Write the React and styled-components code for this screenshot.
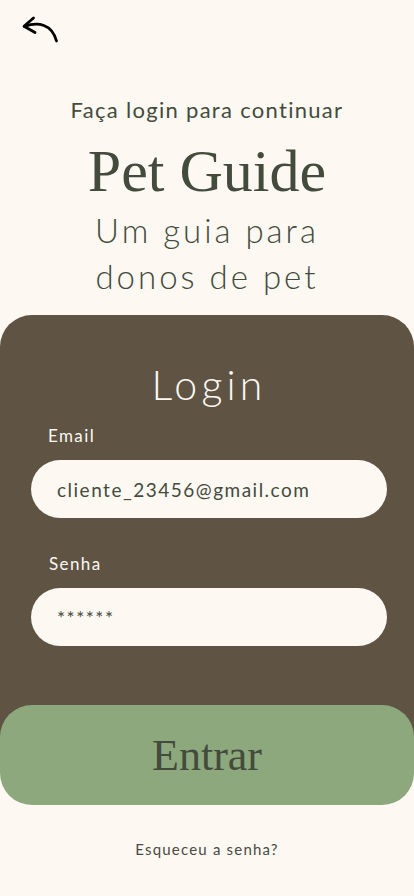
import styled, { createGlobalStyle } from "styled-components";

const GlobalStyle = createGlobalStyle`
  html, body {
    margin: 0;
    padding: 0;
    background: #fdf8f2;
  }
  body {
    font-family: Lato, "Noto Sans", sans-serif;
  }
`;

const colors = {
  cream: "#fdf8f2",
  panel: "#5f5443",
  green: "#8ca87c",
  ink: "#434b3d",
};

const Page = styled.div`
  width: 414px;
  min-height: 896px;
  background: ${colors.cream};
  display: flex;
  flex-direction: column;
  align-items: center;
`;

const TopBar = styled.div`
  width: 100%;
  height: 56px;
  display: flex;
  align-items: flex-start;
  padding: 12px 0 0 18px;
  box-sizing: border-box;
`;

const BackButton = styled.button`
  border: 0;
  background: none;
  padding: 0;
  width: 42px;
  height: 34px;
  cursor: pointer;
`;

const Intro = styled.p`
  margin: 40px 0 0;
  font-size: 22px;
  color: ${colors.ink};
  letter-spacing: 1.3px;
`;

const Title = styled.h1`
  margin: 12px 0 0;
  font-family: "Liberation Serif", serif;
  font-weight: 400;
  font-size: 60px;
  line-height: 72px;
  color: ${colors.ink};
`;

const Subtitle = styled.h2`
  margin: 0;
  font-weight: 300;
  font-size: 33px;
  line-height: 46px;
  letter-spacing: 3px;
  text-align: center;
  color: ${colors.ink};
`;

const Panel = styled.section`
  margin-top: 16px;
  width: 100%;
  background: ${colors.panel};
  border-radius: 32px 32px 0 0;
  padding: 44px 0 109px 4px;
  box-sizing: border-box;
  display: flex;
  flex-direction: column;
  align-items: center;
`;

const PanelTitle = styled.h3`
  margin: 0 0 14px;
  font-weight: 300;
  font-size: 41px;
  line-height: 52px;
  letter-spacing: 4.2px;
  color: ${colors.cream};
`;

const Field = styled.label`
  width: 356px;
  display: flex;
  flex-direction: column;
  margin-bottom: ${({ gap }) => gap || 0}px;
`;

const FieldLabel = styled.span`
  padding-left: ${({ indent }) => indent}px;
  font-size: 17px;
  line-height: 22px;
  letter-spacing: 1.4px;
  color: ${colors.cream};
  margin-bottom: 13px;
`;

const Input = styled.input`
  height: 58px;
  border: 0;
  border-radius: 29px;
  background: ${colors.cream};
  padding: 0 26px;
  font-family: Lato, "Noto Sans", sans-serif;
  font-size: 19px;
  letter-spacing: 1.5px;
  color: ${colors.ink};
  outline: none;
  box-sizing: border-box;
`;

const SubmitButton = styled.button`
  margin-top: -50px;
  width: 414px;
  height: 100px;
  border: 0;
  border-radius: 32px;
  background: ${colors.green};
  font-family: "Liberation Serif", serif;
  font-size: 44px;
  color: ${colors.ink};
  cursor: pointer;
`;

const Forgot = styled.a`
  margin-top: 35px;
  font-size: 15px;
  letter-spacing: 1.2px;
  color: #4a4a44;
  text-decoration: none;
`;

const BackArrow = () => (
  <svg width="42" height="34" viewBox="16 12 42 34" fill="none">
    <path
      d="M22.5 26.5 C 36 21.5, 50 24, 54.5 41"
      stroke="#000"
      strokeWidth="2.8"
      strokeLinecap="round"
    />
    <path
      d="M31.5 18 L22 26.2 L33 32.5"
      stroke="#000"
      strokeWidth="2.8"
      strokeLinecap="round"
      strokeLinejoin="round"
    />
  </svg>
);

export default function App() {
  return (
    <>
      <GlobalStyle />
      <Page>
        <TopBar>
          <BackButton aria-label="Voltar">
            <BackArrow />
          </BackButton>
        </TopBar>
        <Intro>Faça login para continuar</Intro>
        <Title>Pet Guide</Title>
        <Subtitle>
          Um guia para
          <br />
          donos de pet
        </Subtitle>
        <Panel>
          <PanelTitle>Login</PanelTitle>
          <Field gap={35}>
            <FieldLabel indent={17}>Email</FieldLabel>
            <Input type="email" defaultValue="cliente_23456@gmail.com" />
          </Field>
          <Field>
            <FieldLabel indent={18}>Senha</FieldLabel>
            <Input type="text" defaultValue="******" />
          </Field>
        </Panel>
        <SubmitButton>Entrar</SubmitButton>
        <Forgot href="#">Esqueceu a senha?</Forgot>
      </Page>
    </>
  );
}
